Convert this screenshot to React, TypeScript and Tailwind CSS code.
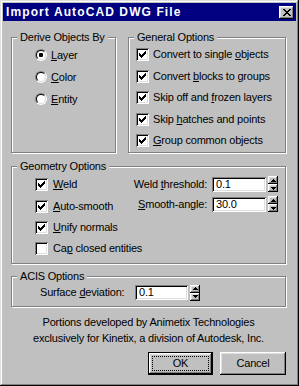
import React from "react";

const raised =
  "shadow-[inset_-1px_-1px_0_#000,inset_1px_1px_0_#fff,inset_-2px_-2px_0_#808080,inset_2px_2px_0_#dfdfdf]";
const sunken =
  "shadow-[inset_1px_1px_0_#808080,inset_-1px_-1px_0_#fff,inset_2px_2px_0_#000,inset_-2px_-2px_0_#dfdfdf]";

function Group({ label, className, children }: { label: string; className?: string; children?: React.ReactNode }) {
  return (
    <div className={`relative border border-[#808080] shadow-[1px_1px_0_#fff,inset_1px_1px_0_#fff] ${className ?? ""}`}>
      <span className="absolute -top-[7px] left-[5px] bg-[#c0c0c0] px-[3px] leading-[13px]">{label}</span>
      {children}
    </div>
  );
}

function Check({ checked }: { checked?: boolean }) {
  return (
    <span className={`flex h-[13px] w-[13px] shrink-0 items-center justify-center bg-white ${sunken}`}>
      {checked && (
        <svg width="7" height="7" viewBox="0 0 7 7" shapeRendering="crispEdges">
          <path
            d="M6 0h1v1h-1zM5 1h2v1h-2zM0 2h1v1h-1zM4 2h3v1h-3zM0 3h2v1h-2zM3 3h3v1h-3zM0 4h5v1h-5zM1 5h3v1h-3zM2 6h1v1h-1z"
            fill="#000"
          />
        </svg>
      )}
    </span>
  );
}

function Radio({ checked }: { checked?: boolean }) {
  return (
    <span className="flex h-[12px] w-[12px] shrink-0 rounded-full border border-t-[#808080] border-l-[#808080] border-r-white border-b-white">
      <span className="flex flex-1 items-center justify-center rounded-full border border-t-black border-l-black border-r-[#dfdfdf] border-b-[#dfdfdf] bg-white">
        {checked && <span className="h-[4px] w-[4px] rounded-[1px] bg-black" />}
      </span>
    </span>
  );
}

function Arrow({ up }: { up?: boolean }) {
  return (
    <svg width="5" height="3" viewBox="0 0 5 3" shapeRendering="crispEdges">
      <path d={up ? "M2 0h1v1h-1zM1 1h3v1h-3zM0 2h5v1h-5z" : "M0 0h5v1h-5zM1 1h3v1h-3zM2 2h1v1h-1z"} fill="#000" />
    </svg>
  );
}

function Spinner() {
  return (
    <div className="ml-[2px] flex h-[16px] w-[10px] flex-col">
      <span className={`flex h-[8px] items-center justify-center ${raised}`}>
        <Arrow up />
      </span>
      <span className={`flex h-[8px] items-center justify-center ${raised}`}>
        <Arrow />
      </span>
    </div>
  );
}

function Field({ value, w }: { value: string; w: string }) {
  return (
    <div className={`flex h-[15px] items-center bg-white pl-[4px] leading-[11px] ${w} ${sunken}`}>{value}</div>
  );
}

export default function App() {
  const general: [React.ReactNode, string][] = [
    [<>Convert to single <u>o</u>bjects</>, "mt-0"],
    [<>Convert <u>b</u>locks to groups</>, "mt-[9px]"],
    [<>Skip off and <u>f</u>rozen layers</>, "mt-[8px]"],
    [<>Skip <u>h</u>atches and points</>, "mt-[9px]"],
    [<><u>G</u>roup common objects</>, "mt-[8px]"],
  ];
  const geometry: [React.ReactNode, boolean, string][] = [
    [<><u>W</u>eld</>, true, "mt-0"],
    [<><u>A</u>uto-smooth</>, true, "mt-[9px]"],
    [<><u>U</u>nify normals</>, true, "mt-[8px]"],
    [<>Ca<u>p</u> closed entities</>, false, "mt-[8px]"],
  ];

  return (
    <div
      className={`flex h-[386px] w-[299px] flex-col bg-[#c0c0c0] p-[3px] font-['Liberation_Sans',Arial,sans-serif] text-[11px] leading-[13px] tracking-[-0.2px] text-black shadow-[inset_-1px_-1px_0_#000,inset_1px_1px_0_#dfdfdf,inset_-2px_-2px_0_#808080,inset_2px_2px_0_#fff]`}
    >
      {/* title bar */}
      <div className="flex h-[18px] items-center justify-between bg-[#000080] pl-[3px] pr-[2px]">
        <span className="text-[12px] font-bold tracking-[1.1px] text-white">Import AutoCAD DWG File</span>
        <span className={`flex h-[13px] w-[15px] items-center justify-center bg-[#c0c0c0] ${raised}`}>
          <svg width="8" height="7" viewBox="0 0 8 7" shapeRendering="crispEdges">
            <path
              d="M0 0h2v1h-2zM6 0h2v1h-2zM1 1h2v1h-2zM5 1h2v1h-2zM2 2h4v1h-4zM3 3h2v1h-2zM2 4h4v1h-4zM1 5h2v1h-2zM5 5h2v1h-2zM0 6h2v1h-2zM6 6h2v1h-2z"
              fill="#000"
            />
          </svg>
        </span>
      </div>

      <div className="flex flex-col pl-[8px] pr-[10px]">
        {/* top row */}
        <div className="mt-[16px] flex gap-[12px]">
          <Group label="Derive Objects By" className="h-[116px] w-[105px] shrink-0">
            <div className="flex flex-col gap-[10px] pl-[23px] pt-[11px]">
              <div className="flex h-[12px] items-center gap-[4px]">
                <Radio checked />
                <span><u>L</u>ayer</span>
              </div>
              <div className="flex h-[12px] items-center gap-[4px]">
                <Radio />
                <span><u>C</u>olor</span>
              </div>
              <div className="flex h-[12px] items-center gap-[4px]">
                <Radio />
                <span><u>E</u>ntity</span>
              </div>
            </div>
          </Group>
          <Group label="General Options" className="h-[116px] flex-1">
            <div className="flex flex-col pl-[7px] pt-[10px]">
              {general.map(([label, mt], i) => (
                <div key={i} className={`flex h-[13px] items-center gap-[4px] ${mt}`}>
                  <Check checked />
                  <span className="whitespace-nowrap">{label}</span>
                </div>
              ))}
            </div>
          </Group>
        </div>

        {/* geometry */}
        <Group label="Geometry Options" className="mt-[13px] h-[98px]">
          <div className="flex">
            <div className="flex w-[121px] flex-col pl-[23px] pt-[11px]">
              {geometry.map(([label, on, mt], i) => (
                <div key={i} className={`flex h-[13px] items-center gap-[5px] ${mt}`}>
                  <Check checked={on} />
                  <span className="whitespace-nowrap">{label}</span>
                </div>
              ))}
            </div>
            <div className="flex flex-col gap-[4px] pt-[9px]">
              <div className="flex h-[16px] items-center">
                <span className="w-[75px] whitespace-nowrap pr-[1px] text-right">
                  Weld <u>t</u>hreshold:
                </span>
                <span className="ml-[4px]" />
                <Field value="0.1" w="w-[54px]" />
                <Spinner />
              </div>
              <div className="flex h-[16px] items-center">
                <span className="w-[75px] whitespace-nowrap pr-[1px] text-right">
                  <u>S</u>mooth-angle:
                </span>
                <span className="ml-[4px]" />
                <Field value="30.0" w="w-[54px]" />
                <Spinner />
              </div>
            </div>
          </div>
        </Group>

        {/* acis */}
        <Group label="ACIS Options" className="mt-[12px] h-[31px]">
          <div className="flex h-[17px] items-center pl-[28px] pt-[7px] box-content">
            <span className="w-[95px] whitespace-nowrap">
              Surface <u>d</u>eviation:
            </span>
            <Field value="0.1" w="w-[53px]" />
            <Spinner />
          </div>
        </Group>

        <p className="mt-[7px] text-center leading-[16px]">
          Portions developed by Animetix Technologies
          <br />
          exclusively for Kinetix, a division of Autodesk, Inc.
        </p>

        <div className="mt-[6px] flex justify-end gap-[7px]">
          <button className="h-[23px] w-[65px] border border-black bg-[#c0c0c0] p-0">
            <span className={`flex h-full w-full items-center justify-center p-[3px] ${raised}`}>
              <span className="flex h-full w-full items-center justify-center border border-dotted border-black">
                OK
              </span>
            </span>
          </button>
          <button className={`flex h-[23px] w-[66px] items-center justify-center bg-[#c0c0c0] ${raised}`}>
            Cancel
          </button>
        </div>
      </div>
    </div>
  );
}
